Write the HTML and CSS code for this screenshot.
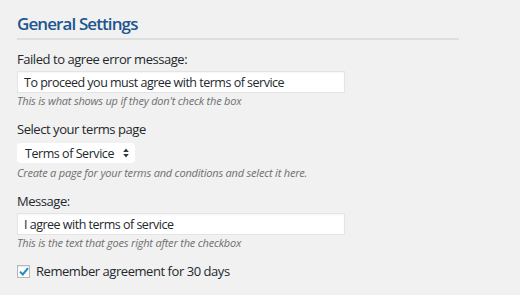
FILE: index.html
```html
<!DOCTYPE html>
<html lang="en">

<head>
  <title>General Settings</title>
  <meta charset="UTF-8">
  <link rel="stylesheet" href="styles.css">
</head>

<body>
  <div class="wrap">
    <h2 class="section-title">General Settings</h2>

    <div class="field">
      <label for="errorMessage">Failed to agree error message:</label>
      <input type="text" id="errorMessage" class="text-input" value="To proceed you must agree with terms of service">
      <p class="description">This is what shows up if they don't check the box</p>
    </div>

    <div class="field">
      <label for="termsPage">Select your terms page</label>
      <div class="select-box" id="termsPage">
        <span>Terms of Service</span>
        <svg class="select-arrows" width="6" height="10" viewBox="0 0 6 10">
          <path d="M3 0.5 L5.8 4 L0.2 4 Z" fill="#32373c" />
          <path d="M3 9.5 L5.8 6 L0.2 6 Z" fill="#32373c" />
        </svg>
      </div>
      <p class="description">Create a page for your terms and conditions and select it here.</p>
    </div>

    <div class="field">
      <label for="agreeMessage">Message:</label>
      <input type="text" id="agreeMessage" class="text-input" value="I agree with terms of service">
      <p class="description">This is the text that goes right after the checkbox</p>
    </div>

    <label class="check-row">
      <span class="checkbox">
        <svg width="10" height="9" viewBox="0 0 10 9">
          <path d="M1 4.6 L3.8 7.4 L9 1.2" fill="none" stroke="#1e8cbe" stroke-width="2" />
        </svg>
      </span>
      Remember agreement for 30 days
    </label>
  </div>
</body>

</html>
```

FILE: styles.css
```css
* {
  box-sizing: border-box;
  margin: 0;
  padding: 0;
}

body {
  background-color: #f1f1f1;
  color: #23282d;
  font-family: 'Open Sans', 'Liberation Sans', sans-serif;
  font-size: 13px;
}

.wrap {
  padding: 13px 0 0 17px;
  width: 459px;
}

.section-title {
  color: #21558f;
  font-size: 17px;
  font-weight: 600;
  letter-spacing: -0.9px;
  line-height: 22px;
  padding-bottom: 3px;
  border-bottom: 2px solid #dedede;
  margin-bottom: 10px;
}

.field {
  margin-bottom: 12px;
}

label {
  display: block;
  font-size: 13px;
  letter-spacing: -0.45px;
  line-height: 18px;
  margin-bottom: 3px;
}

.text-input {
  display: block;
  width: 328px;
  height: 22px;
  padding: 0 6px;
  border: 1px solid #e4e4e4;
  background: #fff;
  font-family: inherit;
  font-size: 12.5px;
  letter-spacing: -0.5px;
  color: #23282d;
  box-shadow: inset 0 1px 2px rgba(0, 0, 0, 0.04);
}

.description {
  font-size: 11px;
  letter-spacing: -0.2px;
  font-style: italic;
  color: #6f6f6f;
  line-height: 15px;
}

.select-box {
  display: inline-flex;
  align-items: center;
  gap: 9px;
  height: 20px;
  margin: 2px 0;
  padding: 0 6px 0 8px;
  background: #fff;
  border-radius: 4px;
  font-size: 12.5px;
  letter-spacing: -0.45px;
}

.check-row {
  display: flex;
  align-items: flex-start;
  gap: 6px;
  margin-top: 10px;
}

.checkbox {
  display: flex;
  align-items: center;
  justify-content: center;
  width: 13px;
  height: 13px;
  margin-top: 3px;
  background: #fff;
  border: 1px solid #b4b9be;
  box-shadow: inset 0 1px 2px rgba(0, 0, 0, 0.1);
}
```
